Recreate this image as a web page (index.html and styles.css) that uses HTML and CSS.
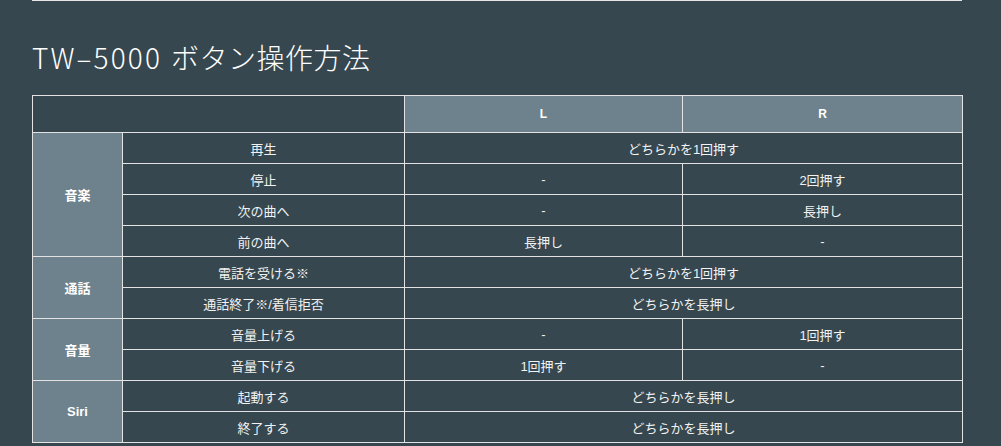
FILE: index.html
```html
<!DOCTYPE html>
<html lang="ja">
<head>
<meta charset="utf-8">
<link rel="stylesheet" href="styles.css">
</head>
<body>
<div class="page">
  <div class="rule"></div>
  <h2 class="title"><span class="model">TW–5000</span> ボタン操作方法</h2>
  <table class="ops">
    <colgroup>
      <col class="c-cat"><col class="c-act"><col class="c-l"><col class="c-r">
    </colgroup>
    <thead>
      <tr><th colspan="2" class="blank"></th><th class="hd">L</th><th class="hd">R</th></tr>
    </thead>
    <tbody>
      <tr><th rowspan="4" class="cat">音楽</th><td>再生</td><td colspan="2">どちらかを1回押す</td></tr>
      <tr><td>停止</td><td>-</td><td>2回押す</td></tr>
      <tr><td>次の曲へ</td><td>-</td><td>長押し</td></tr>
      <tr><td>前の曲へ</td><td>長押し</td><td>-</td></tr>
      <tr><th rowspan="2" class="cat">通話</th><td>電話を受ける※</td><td colspan="2">どちらかを1回押す</td></tr>
      <tr><td>通話終了※/着信拒否</td><td colspan="2">どちらかを長押し</td></tr>
      <tr><th rowspan="2" class="cat">音量</th><td>音量上げる</td><td>-</td><td>1回押す</td></tr>
      <tr><td>音量下げる</td><td>1回押す</td><td>-</td></tr>
      <tr><th rowspan="2" class="cat">Siri</th><td>起動する</td><td colspan="2">どちらかを長押し</td></tr>
      <tr><td>終了する</td><td colspan="2">どちらかを長押し</td></tr>
    </tbody>
  </table>
</div>
</body>
</html>
```
FILE: styles.css
```css
html, body {
  margin: 0;
  padding: 0;
  background: #36474f;
}
body {
  color: #ffffff;
  font-family: "Liberation Sans", "Noto Sans CJK JP", sans-serif;
}
.page {
  width: 930px;
  margin-left: 32px;
}
.rule {
  height: 1px;
  background: #e6e6e6;
}
.title {
  margin: 0;
  padding: 38px 0 0 0;
  height: 56px;
  box-sizing: content-box;
  font-family: "Noto Sans CJK JP", sans-serif;
  font-weight: 300;
  font-size: 28px;
  line-height: 36px;
  letter-spacing: 0.5px;
  color: #ffffff;
}
.title .model {
  letter-spacing: 2.2px;
  margin-right: 2px;
}
.ops {
  width: 930px;
  border-collapse: collapse;
  table-layout: fixed;
  font-size: 13px;
}
.c-cat { width: 90px; }
.c-act { width: 282px; }
.c-l { width: 278px; }
.c-r { width: 280px; }
.ops th, .ops td {
  border: 1px solid #e3e3e3;
  text-align: center;
  padding: 0;
  height: 30px;
  color: #f2f2f2;
}
.ops thead th {
  height: 36px;
}
.ops .hd {
  background: #6d828c;
  font-weight: bold;
  font-size: 12px;
  color: #ffffff;
}
.ops .cat {
  background: #6d828c;
  font-weight: bold;
  font-size: 13px;
  color: #ffffff;
}
```
